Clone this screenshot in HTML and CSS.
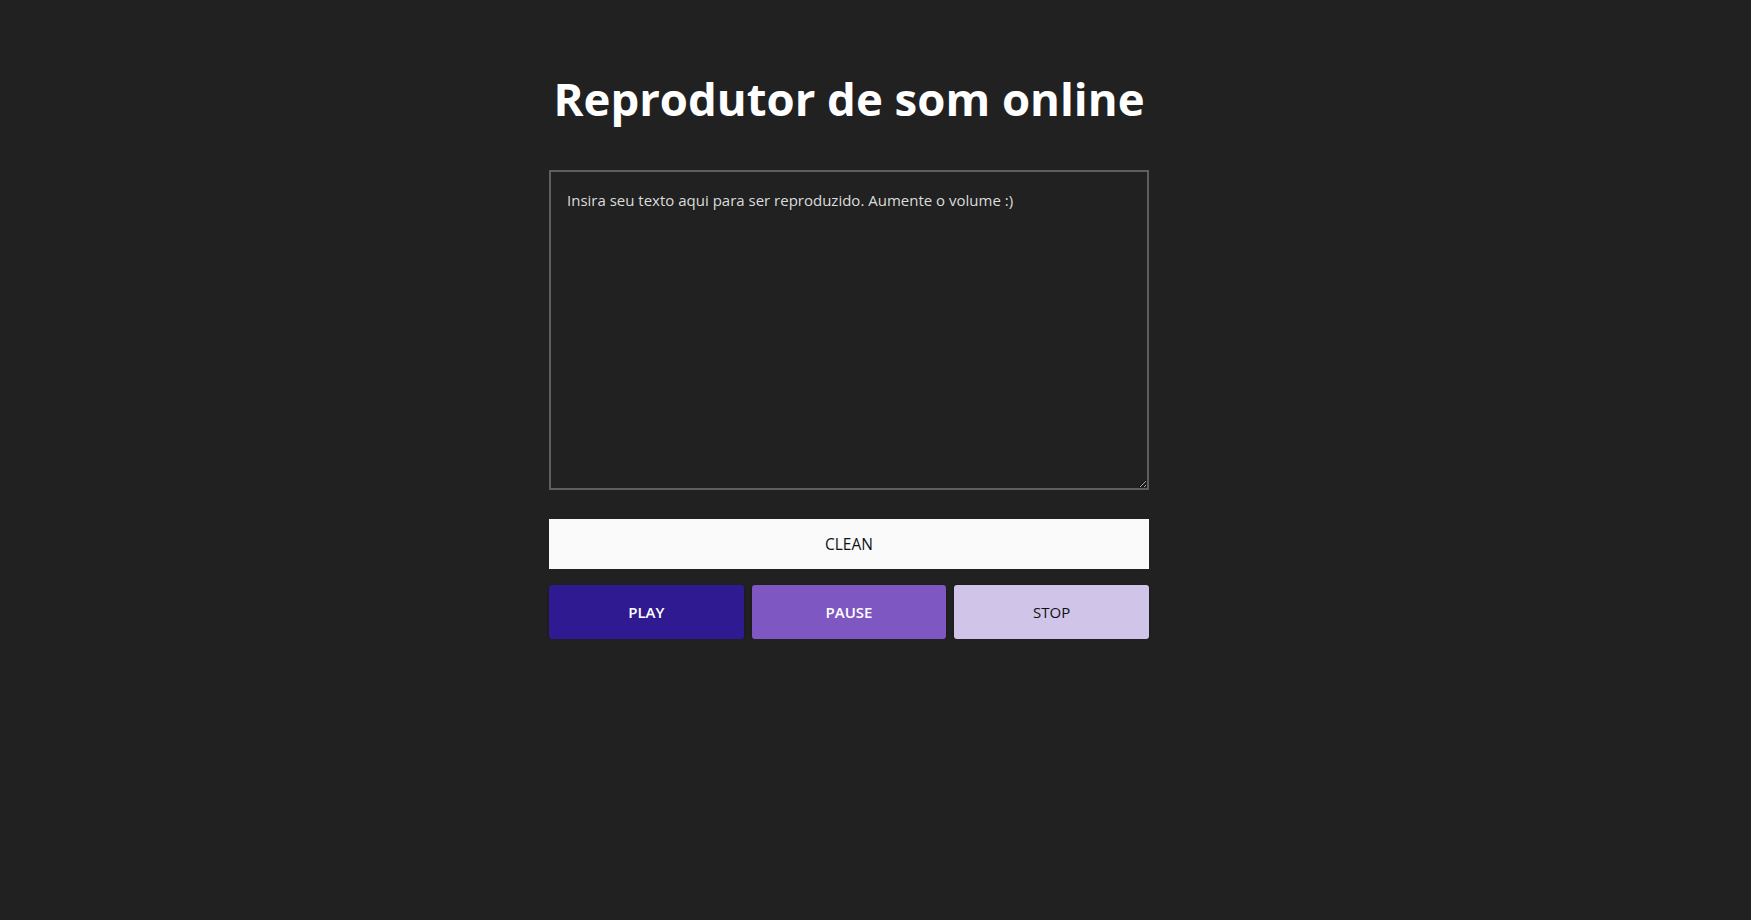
FILE: index.html
```html
<!DOCTYPE html>
<html lang="pt">
<head>
<meta charset="utf-8">
<title>Reprodutor de som online</title>
<link rel="stylesheet" href="styles.css">
</head>
<body>
<main class="player">
  <h1 class="title">Reprodutor de som online</h1>
  <textarea class="text-input" placeholder="Insira seu texto aqui para ser reproduzido. Aumente o volume :)"></textarea>
  <button class="btn-clean" type="button">CLEAN</button>
  <div class="controls">
    <button class="btn btn-play" type="button">PLAY</button>
    <button class="btn btn-pause" type="button">PAUSE</button>
    <button class="btn btn-stop" type="button">STOP</button>
  </div>
</main>
</body>
</html>
```
FILE: styles.css
```css
html, body {
  margin: 0;
  padding: 0;
  background: #212121;
}

body {
  font-family: "Open Sans", "Noto Sans", "Liberation Sans", sans-serif;
}

.player {
  width: 600px;
  margin-left: 549px;
  padding-top: 71px;
  display: flex;
  flex-direction: column;
}

.title {
  margin: 0 0 45px;
  font-size: 45.5px;
  line-height: 54px;
  font-weight: 700;
  color: #ffffff;
  text-align: center;
}

.text-input {
  box-sizing: border-box;
  width: 600px;
  height: 320px;
  margin: 0;
  padding: 18px 16px 16px 16px;
  border: 2px solid #5e5e5e;
  background: #212121;
  color: #e0e0e0;
  font-family: inherit;
  font-size: 15px;
  line-height: 20px;
  outline: none;
  resize: both;
}

.text-input::placeholder {
  color: #dcdcdc;
  opacity: 1;
}

.btn-clean {
  margin-top: 29px;
  height: 50px;
  border: 0;
  background: #fafafa;
  color: #111111;
  font-family: inherit;
  font-size: 15.5px;
  font-weight: 400;
  cursor: pointer;
}

.controls {
  margin-top: 16px;
  display: grid;
  grid-template-columns: 1fr 1fr 1fr;
  gap: 8px;
}

.btn {
  height: 54px;
  border: 0;
  border-radius: 3px;
  font-family: inherit;
  font-size: 15px;
  cursor: pointer;
  box-shadow: 0 1px 3px rgba(0, 0, 0, 0.35);
}

.btn-play {
  background: #2f1a92;
  color: #ffffff;
  font-weight: 600;
}

.btn-pause {
  background: #7e57c2;
  color: #ffffff;
  font-weight: 600;
}

.btn-stop {
  background: #d1c4e9;
  color: #111111;
  font-weight: 400;
}
```
